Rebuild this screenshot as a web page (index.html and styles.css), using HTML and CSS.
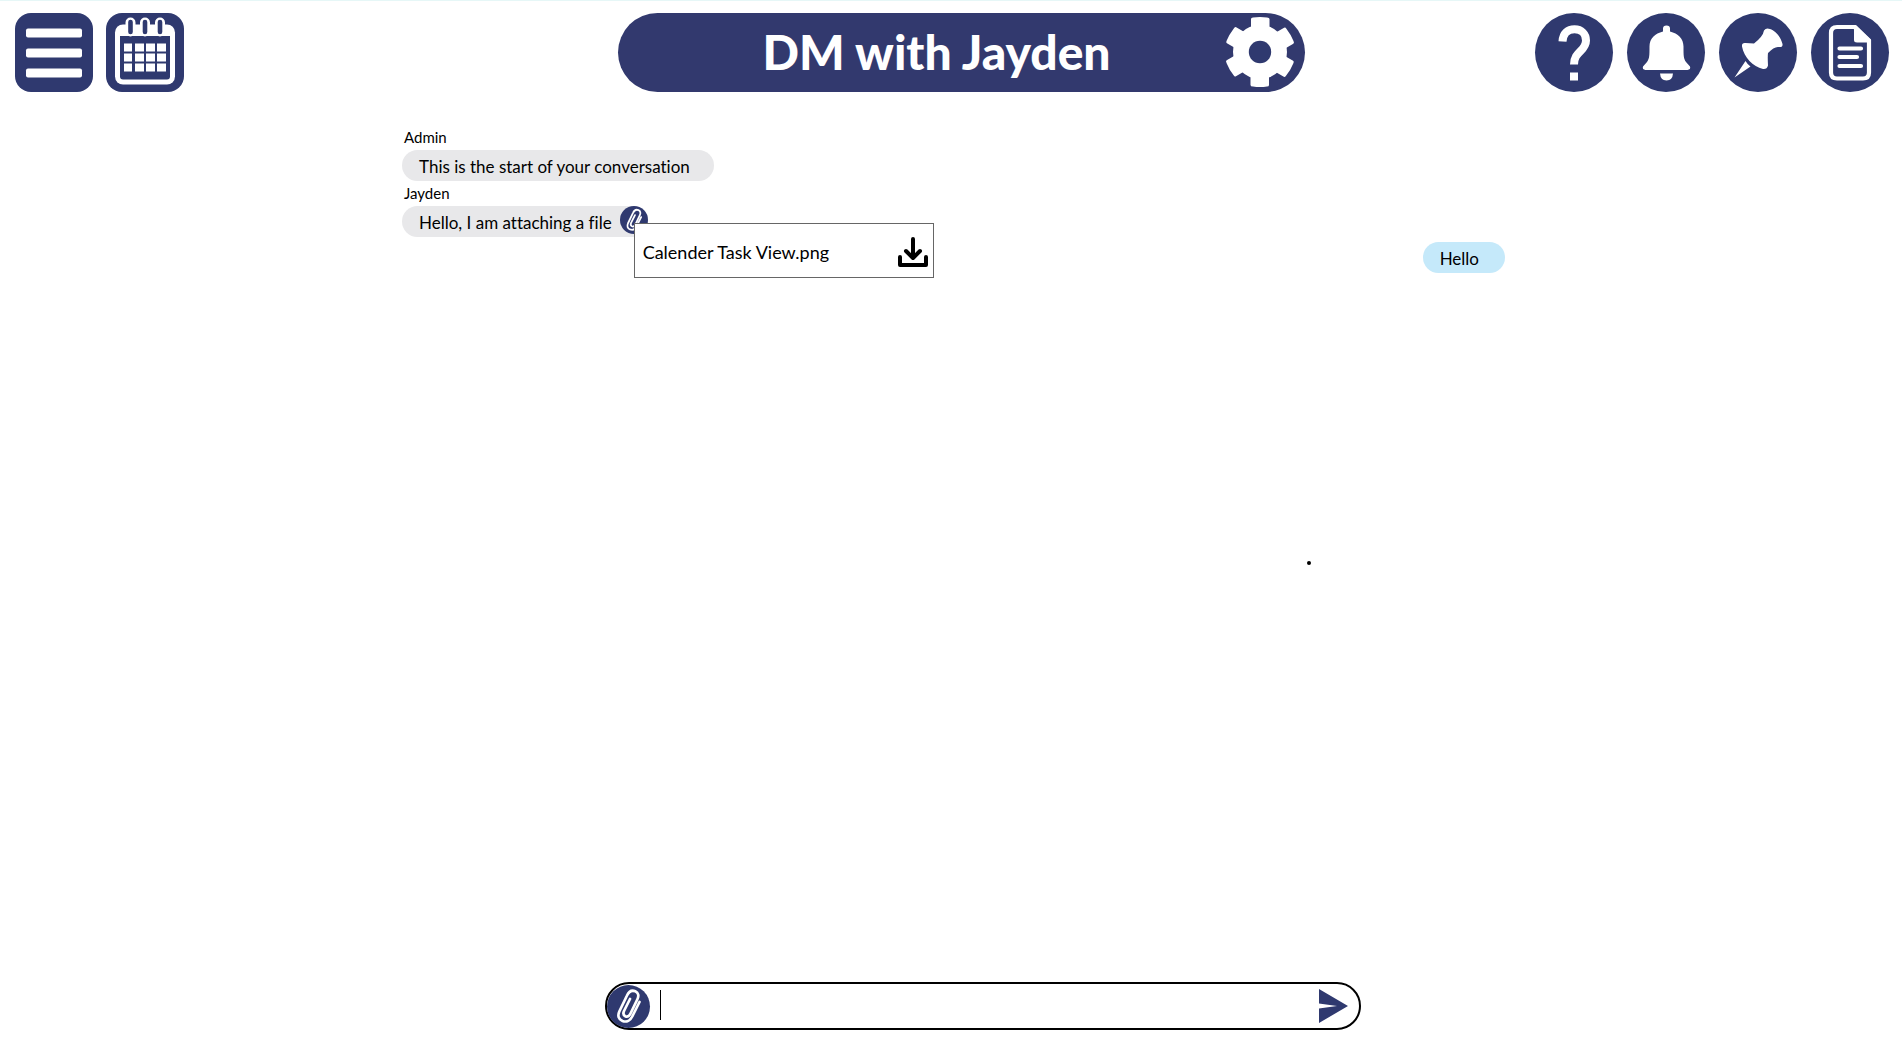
FILE: index.html
```html
<!DOCTYPE html>
<html lang="en">
<head>
<meta charset="utf-8">
<meta name="viewport" content="width=device-width, initial-scale=1">
<title>DM with Jayden</title>
<link rel="stylesheet" href="styles.css">
</head>
<body>
<svg class="sprite" aria-hidden="true">
  <symbol id="clip" viewBox="0 0 43 43">
    <g fill="none" stroke="#fff" stroke-width="2.7" stroke-linecap="round" stroke-linejoin="round">
      <path d="M32.500 17L25.500 31C23.500 35.500 19.500 37.500 15.500 36C11.300 34.200 10.500 30.500 12.300 26.500L20 10.500C21.800 6.500 25 5 28.300 6.300C31.500 7.700 32 10.800 30.500 14L23.500 28.500C22.100 31.300 20 32 18.300 31.200C16.300 30.200 16 28.300 17 26L23 14"/>
    </g>
  </symbol>
</svg>
<header class="topbar">
  <nav class="group" aria-label="Main">
    <button class="icon-button square" type="button" aria-label="Menu">
      <svg viewBox="0 0 78 78"><g fill="#fff"><rect x="11" y="15" width="56" height="9" rx="2"/><rect x="11" y="35" width="56" height="9" rx="2"/><rect x="11" y="55" width="56" height="9" rx="2"/></g></svg>
    </button>
    <button class="icon-button square" type="button" aria-label="Calendar">
      <svg viewBox="0 0 78 78">
        <rect x="9" y="11" width="60" height="60" rx="8" fill="#fff"/>
        <path d="M14 22.500H64V63Q64 66 61 66H17Q14 66 14 63Z" fill="#2f396f"/>
        <g stroke-linecap="round"><path d="M24.500 9V18M39 9V18M54 9V18" stroke="#fff" stroke-width="10"/><path d="M24.500 8.500V18.500M39 8.500V18.500M54 8.500V18.500" stroke="#2f396f" stroke-width="4.600"/></g>
        <g fill="#fff"><path d="M18 30h8v8h-8zM29 30h9v8h-9zM40 30h9v8h-9zM51 30h9v8h-9zM18 40h8v8h-8zM29 40h9v8h-9zM40 40h9v8h-9zM51 40h9v8h-9zM18 50h8v8h-8zM29 50h9v8h-9zM40 50h9v8h-9zM51 50h9v8h-9z"/></g>
      </svg>
    </button>
  </nav>
  <div class="title-bar">
    <h1 class="title">DM with Jayden</h1>
    <button class="settings" type="button" aria-label="Conversation settings">
      <svg viewBox="0 0 70 70"><g fill="#fff"><circle cx="35" cy="35" r="27"/><g id="teeth"><path id="tooth" d="M26 13V2Q26 .500 28 .500Q35 -.500 42 .500Q44.500 .500 44.500 2V13L40 20H30Z"/><use href="#tooth" transform="rotate(60 35 35)"/><use href="#tooth" transform="rotate(120 35 35)"/></g><use href="#teeth" transform="rotate(180 35 35)"/></g><circle cx="35" cy="35" r="11.200" fill="#2f396f"/></svg>
    </button>
  </div>
  <nav class="group group-end" aria-label="Tools">
    <button class="icon-button round" type="button" aria-label="Help">
      <svg viewBox="0 0 78 78"><path d="M27.500 28C28 19.500 33 15.800 39.500 15.800C46.500 15.800 51 20.500 51 27C51 38 39 37.500 39 51" fill="none" stroke="#fff" stroke-width="8"/><rect x="35" y="59" width="8" height="8" fill="#fff"/></svg>
    </button>
    <button class="icon-button round" type="button" aria-label="Notifications">
      <svg viewBox="0 0 78 78"><g fill="#fff"><path d="M36 18V15Q36 12 39.500 12T43 15V18C51 20 56.500 25 56.500 33C56.500 42 56.500 45 59 48.500L63 53Q64 56 60.500 56.500H18.500Q15 56 16 53L20 48.500C22.500 45 22.500 42 22.500 33C22.500 25 28 20 36 18Z"/><path d="M33 60H46Q45.500 67 39.500 67T33 60Z"/></g></svg>
    </button>
    <button class="icon-button round" type="button" aria-label="Pinned messages">
      <svg viewBox="0 0 78 78"><g fill="#fff"><path d="M45 17Q47 14 51 15.500C56.500 17 62 24 63.500 30.500Q64 34 60 33.500Q55.500 32.500 49 39.500Q48.500 43 49 52Q48 56 44 55.500C34 53 25 44 23 33Q22.500 29 26.500 29.500L35 30Q44 23 45 17Z"/><path d="M26.500 47.500Q28.500 51 31.500 53L15.500 64Z"/></g></svg>
    </button>
    <button class="icon-button round" type="button" aria-label="Documents">
      <svg viewBox="0 0 78 78"><g fill="none" stroke="#fff" stroke-width="4.200" stroke-linecap="round"><path d="M26 13.500H43.500L58 27.500V59Q58 65 52 65H26Q20 65 20 59V19.500Q20 13.500 26 13.500Z"/><path d="M28.500 35H50M28.500 43.500H46M28.500 52.500H50"/></g><path d="M43 12V26.500Q43 29 46 29H60V26L45 11.500Z" fill="#fff"/></svg>
    </button>
  </nav>
</header>

<main class="conversation">
  <section class="messages" aria-label="Messages">
    <p class="sender">Admin</p>
    <p class="bubble">This is the start of your conversation</p>
    <p class="sender">Jayden</p>
    <div class="bubble with-file">
      <p class="text">Hello, I am attaching a file</p>
      <button class="attached" type="button" aria-label="Show attachment"><svg viewBox="0 0 43 43"><use href="#clip"/></svg></button>
      <div class="file-menu">
        <span>Calender Task View.png</span>
        <button class="download" type="button" aria-label="Download">
          <svg viewBox="0 0 30 30"><g fill="none" stroke="#000" stroke-width="4" stroke-linecap="round" stroke-linejoin="round"><path d="M15 2V20M8 14L15 21L22 14M2 20V28H28V20"/></g></svg>
        </button>
      </div>
    </div>
    <p class="bubble own">Hello</p>
  </section>
</main>
<span class="dot"></span>

<footer class="footer">
  <form class="composer">
    <button class="attach" type="button" aria-label="Attach a file"><svg viewBox="0 0 43 43"><use href="#clip"/></svg></button>
    <span class="caret"></span>
    <input class="entry" type="text" aria-label="Message">
    <button class="send" type="button" aria-label="Send"><svg viewBox="0 0 29 34"><path d="M0 0L29 17L0 34V19.500L18 17L0 14.500Z" fill="#2f396f"/></svg></button>
  </form>
</footer>
</body>
</html>
```
FILE: styles.css
```css
* { box-sizing: border-box; }

body {
  margin: 0;
  min-height: 100vh;
  display: flex;
  flex-direction: column;
  background: #fff;
  color: #000;
  font-family: "Gill Sans", "Gill Sans MT", Lato, sans-serif;
  font-size: 17px;
  line-height: 20px;
  font-variant-ligatures: none;
}

h1, p { margin: 0; }

button {
  padding: 0;
  border: 0;
  background: none;
  color: inherit;
  font: inherit;
  cursor: pointer;
}

svg { display: block; width: 100%; height: 100%; overflow: visible; }

.sprite { position: absolute; width: 0; height: 0; }

.topbar {
  display: grid;
  grid-template-columns: 603fr 687fr 584fr;
  padding: 12px 13px 12px 15px;
  border-top: 1px solid #e6f7f7;
}

.group { display: flex; gap: 13px; }
.group-end { justify-content: flex-end; gap: 14px; }

.icon-button { width: 78px; height: 79px; background: #2f396f; }
.square { border-radius: 16px; }
.round { border-radius: 50%; }

.title-bar {
  display: grid;
  grid-template-columns: 1fr auto;
  align-items: center;
  padding: 0 10px 2px 30px;
  height: 79px;
  border-radius: 40px;
  background: #32396e;
}

.title {
  color: #fff;
  font-size: 48px;
  line-height: 60px;
  font-weight: 900;
  text-align: center;
  white-space: nowrap;
}

.settings { width: 70px; height: 70px; }

.conversation {
  flex: 1;
  display: grid;
  grid-template-columns: 402fr 1103fr 397fr;
  padding-top: 21px;
}

.messages {
  grid-column: 2;
  display: flex;
  flex-direction: column;
  align-items: flex-start;
}

.sender { padding-left: 2px; font-size: 15px; line-height: 25px; }

.bubble {
  height: 31px;
  padding: 2px 24px 0 17px;
  border-radius: 16px;
  background: #e8e8ea;
  line-height: 29px;
  white-space: nowrap;
}

.with-file {
  position: relative;
  display: flex;
  gap: 8px;
  padding: 0 0 0 17px;
}

.text { padding-top: 2px; }

.attached {
  width: 28px;
  height: 28px;
  border-radius: 50%;
  background: #2f396f;
}

.file-menu {
  position: absolute;
  top: 17px;
  left: calc(100% - 14px);
  display: flex;
  align-items: center;
  justify-content: space-between;
  width: 300px;
  height: 55px;
  padding: 3px 5px 0 8px;
  border: 1px solid #666;
  background: #fff;
  font-size: 18px;
}

.download { width: 30px; height: 30px; }

.own {
  align-self: flex-end;
  margin-top: 5px;
  padding-right: 26px;
  background: #c5e9fa;
}

.dot {
  position: absolute;
  top: 561px;
  left: 1307px;
  width: 4px;
  height: 4px;
  border-radius: 50%;
  background: #000;
}

.footer {
  display: grid;
  grid-template-columns: 605fr 756fr 541fr;
  padding-bottom: 7px;
}

.composer {
  grid-column: 2;
  display: flex;
  align-items: center;
  height: 48px;
  padding: 0 11px 0 0;
  border: 2px solid #000;
  border-radius: 24px;
}

.attach {
  width: 43px;
  height: 43px;
  border-radius: 50%;
  background: #2f396f;
}

.caret { width: 1px; height: 30px; margin: 0 0 3px 10px; background: #000; }

.entry {
  flex: 1;
  min-width: 0;
  height: 40px;
  border: 0;
  outline: 0;
  background: none;
  font: inherit;
}

.send { width: 29px; height: 34px; }
```
